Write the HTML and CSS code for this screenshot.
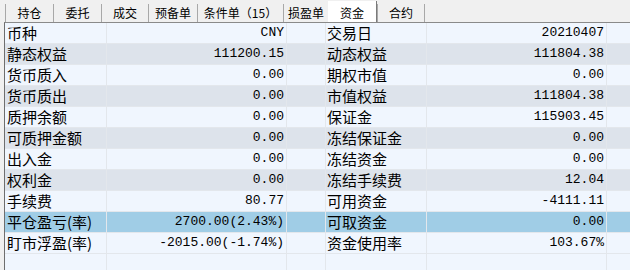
FILE: index.html
```html
<!DOCTYPE html>
<html lang="zh">
<head>
<meta charset="utf-8">
<title>资金</title>
<link rel="stylesheet" href="styles.css">
</head>
<body>
<div class="tabs">
  <div class="tab t1">持仓</div>
  <div class="tab t2">委托</div>
  <div class="tab t3">成交</div>
  <div class="tab t4">预备单</div>
  <div class="tab t5">条件单（15）</div>
  <div class="tab t6">损盈单</div>
  <div class="tab t7 active">资金</div>
  <div class="tab t8">合约</div>
</div>
<div class="grid">
  <div class="row light"><div class="c lab">币种</div><div class="c val">CNY</div><div class="c gap"></div><div class="c lab2">交易日</div><div class="c val">20210407</div><div class="c end"></div></div>
  <div class="row dark"><div class="c lab">静态权益</div><div class="c val">111200.15</div><div class="c gap"></div><div class="c lab2">动态权益</div><div class="c val">111804.38</div><div class="c end"></div></div>
  <div class="row light"><div class="c lab">货币质入</div><div class="c val">0.00</div><div class="c gap"></div><div class="c lab2">期权市值</div><div class="c val">0.00</div><div class="c end"></div></div>
  <div class="row dark"><div class="c lab">货币质出</div><div class="c val">0.00</div><div class="c gap"></div><div class="c lab2">市值权益</div><div class="c val">111804.38</div><div class="c end"></div></div>
  <div class="row light"><div class="c lab">质押余额</div><div class="c val">0.00</div><div class="c gap"></div><div class="c lab2">保证金</div><div class="c val">115903.45</div><div class="c end"></div></div>
  <div class="row dark"><div class="c lab">可质押金额</div><div class="c val">0.00</div><div class="c gap"></div><div class="c lab2">冻结保证金</div><div class="c val">0.00</div><div class="c end"></div></div>
  <div class="row light"><div class="c lab">出入金</div><div class="c val">0.00</div><div class="c gap"></div><div class="c lab2">冻结资金</div><div class="c val">0.00</div><div class="c end"></div></div>
  <div class="row dark"><div class="c lab">权利金</div><div class="c val">0.00</div><div class="c gap"></div><div class="c lab2">冻结手续费</div><div class="c val">12.04</div><div class="c end"></div></div>
  <div class="row light"><div class="c lab">手续费</div><div class="c val">80.77</div><div class="c gap"></div><div class="c lab2">可用资金</div><div class="c val">-4111.11</div><div class="c end"></div></div>
  <div class="row sel"><div class="c lab">平仓盈亏(率)</div><div class="c val">2700.00(2.43%)</div><div class="c gap"></div><div class="c lab2">可取资金</div><div class="c val">0.00</div><div class="c end"></div></div>
  <div class="row light"><div class="c lab">盯市浮盈(率)</div><div class="c val">-2015.00(-1.74%)</div><div class="c gap"></div><div class="c lab2">资金使用率</div><div class="c val">103.67%</div><div class="c end"></div></div>
  <div class="row light"><div class="c lab"></div><div class="c val"></div><div class="c gap"></div><div class="c lab2"></div><div class="c val"></div><div class="c end"></div></div>
</div>
</body>
</html>
```

FILE: styles.css
```css
html, body {
  margin: 0;
  padding: 0;
  background: #f0f0f0;
  overflow: hidden;
  height: 270px;
}
body {
  font-family: "Noto Sans CJK SC", "Liberation Sans", sans-serif;
  color: #000;
}
.tabs {
  display: flex;
  height: 22px;
  padding-left: 5px;
  box-sizing: border-box;
}
.tab {
  margin-top: 4px;
  height: 18px;
  line-height: 18px;
  font-size: 12px;
  text-align: center;
  border-left: 1px solid #a8a8a8;
  box-sizing: border-box;
  white-space: nowrap;
}
.t1 { width: 48px; }
.t2 { width: 48px; }
.t3 { width: 47px; }
.t4 { width: 49px; }
.t5 { width: 86px; }
.t6 { width: 45px; }
.t7 { width: 49px; }
.t8 { width: 48px; border-right: 1px solid #a8a8a8; }
.tab.active {
  margin-top: 1px;
  height: 21px;
  line-height: 24px;
  background: #ffffff;
  border-left: none;
  border-right: 1px solid #7a7a7a;
}
.grid {
  margin-left: 4px;
  border-top: 1px solid #8a8a8a;
  border-left: 1px solid #6e6e6e;
  background: #f0f6fe;
  height: 248px;
  overflow: hidden;
}
.row {
  display: grid;
  grid-template-columns: 102px 180px 39px 101px 180px 1fr;
  height: 21px;
}
.light { background: #f0f6fe; }
.dark { background: #dde3eb; }
.sel { background: #a0cde6; }
.c {
  box-sizing: border-box;
  border-right: 1px solid #e3e7ec;
  border-bottom: 1px solid #e3e7ec;
  height: 21px;
  line-height: 20px;
  white-space: nowrap;
  overflow: hidden;
}
.lab {
  font-size: 15px;
  padding-left: 2px;
}
.lab2 {
  font-size: 15px;
  padding-left: 1px;
}
.val {
  font-family: "Liberation Mono", "DejaVu Sans Mono", monospace;
  font-size: 13px;
  text-align: right;
  padding-right: 2px;
}
.end { border-right: none; }
```
